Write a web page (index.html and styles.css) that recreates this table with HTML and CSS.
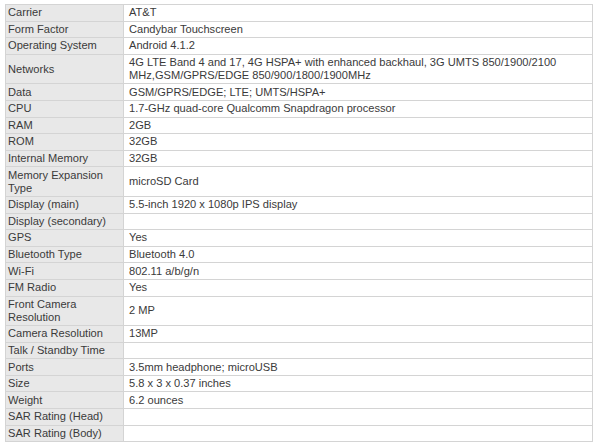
FILE: index.html
```html
<!DOCTYPE html>
<html>
<head>
<meta charset="utf-8">
<link rel="stylesheet" href="styles.css">
</head>
<body>
<table class="specs">
<colgroup><col class="c-label"><col class="c-value"></colgroup>
<tbody>
<tr><th>Carrier</th><td>AT&amp;T</td></tr>
<tr><th>Form Factor</th><td>Candybar Touchscreen</td></tr>
<tr><th>Operating System</th><td>Android 4.1.2</td></tr>
<tr><th>Networks</th><td>4G LTE Band 4 and 17, 4G HSPA+ with enhanced backhaul, 3G UMTS 850/1900/2100 MHz,GSM/GPRS/EDGE 850/900/1800/1900MHz</td></tr>
<tr><th>Data</th><td>GSM/GPRS/EDGE; LTE; UMTS/HSPA+</td></tr>
<tr><th>CPU</th><td>1.7-GHz quad-core Qualcomm Snapdragon processor</td></tr>
<tr><th>RAM</th><td>2GB</td></tr>
<tr><th>ROM</th><td>32GB</td></tr>
<tr><th>Internal Memory</th><td>32GB</td></tr>
<tr><th>Memory Expansion Type</th><td>microSD Card</td></tr>
<tr><th>Display (main)</th><td>5.5-inch 1920 x 1080p IPS display</td></tr>
<tr><th>Display (secondary)</th><td></td></tr>
<tr><th>GPS</th><td>Yes</td></tr>
<tr><th>Bluetooth Type</th><td>Bluetooth 4.0</td></tr>
<tr><th>Wi-Fi</th><td>802.11 a/b/g/n</td></tr>
<tr><th>FM Radio</th><td>Yes</td></tr>
<tr><th>Front Camera Resolution</th><td>2 MP</td></tr>
<tr><th>Camera Resolution</th><td>13MP</td></tr>
<tr><th>Talk / Standby Time</th><td></td></tr>
<tr><th>Ports</th><td>3.5mm headphone; microUSB</td></tr>
<tr><th>Size</th><td>5.8 x 3 x 0.37 inches</td></tr>
<tr><th>Weight</th><td>6.2 ounces</td></tr>
<tr><th>SAR Rating (Head)</th><td></td></tr>
<tr><th>SAR Rating (Body)</th><td></td></tr>
</tbody>
</table>
</body>
</html>
```
FILE: styles.css
```css
html, body {
  margin: 0;
  padding: 0;
  background: #ffffff;
}
body {
  padding: 4px 0 0 5px;
  font-family: "Liberation Sans", Arial, sans-serif;
  font-size: 11.1px;
  color: #3a3a3a;
}
.specs {
  border-collapse: collapse;
  width: 588px;
  table-layout: fixed;
}
.c-label { width: 118px; }
.specs th,
.specs td {
  border: 1px solid #d4d4d4;
  line-height: 13px;
  padding: 1.3px 4px 1.3px 2px;
  text-align: left;
  vertical-align: middle;
  font-weight: normal;
}
.specs th {
  background: #e8e8e8;
}
.specs td {
  background: #ffffff;
  padding-left: 5px;
}
```
